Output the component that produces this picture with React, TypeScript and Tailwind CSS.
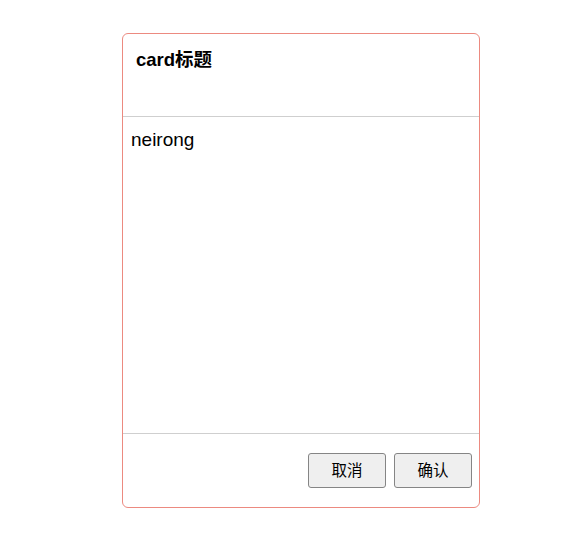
const fontStack = { fontFamily: '"Liberation Sans", "Noto Sans CJK SC", sans-serif' };

const Button = ({ label }: { label: string }) => (
  <button className="w-[78px] h-[35px] rounded-[3px] border border-[#858585] bg-[#efefef] text-[15.5px] text-black leading-none">
    {label}
  </button>
);

export default function App() {
  return (
    <div className="w-[580px] h-[547px] bg-white pt-[33px] pl-[122px]" style={fontStack}>
      <div className="w-[358px] h-[475px] flex flex-col rounded-[6px] border border-[#ec8a80]">
        <div className="h-[83px] shrink-0 border-b border-[#cfcfcf] pl-[13px] pt-[14px]">
          <div className="text-[18.5px] leading-[24px] font-bold text-black">card标题</div>
        </div>
        <div className="h-[317px] shrink-0 border-b border-[#cfcfcf] pl-[8px] pt-[11px]">
          <div className="text-[19px] leading-[24px] text-black">neirong</div>
        </div>
        <div className="flex-1 flex justify-end items-start gap-[8px] pt-[19px] pr-[7px]">
          <Button label="取消" />
          <Button label="确认" />
        </div>
      </div>
    </div>
  );
}
